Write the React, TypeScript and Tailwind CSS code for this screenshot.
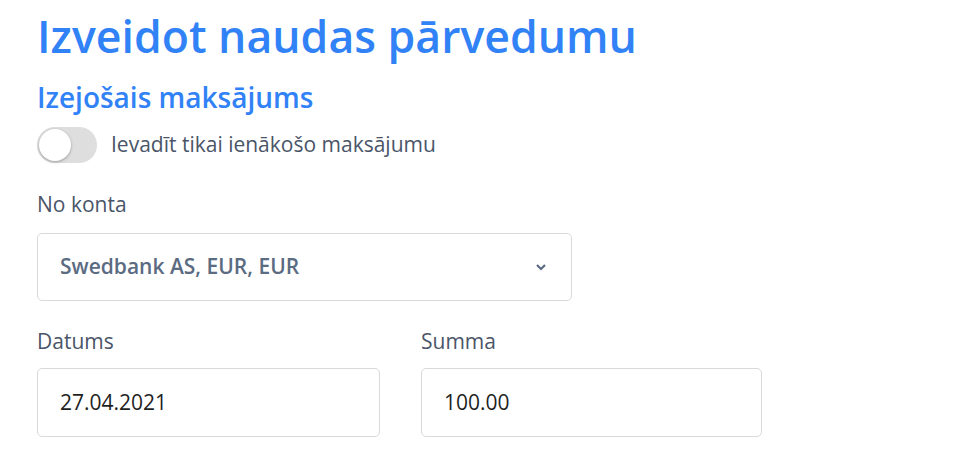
import { useState } from "react";

export default function App() {
  const [incomingOnly, setIncomingOnly] = useState(false);

  return (
    <div className="min-h-screen bg-white px-[37px] pt-[6px] font-['Open_Sans',sans-serif]">
      <h1 className="text-[44.6px] leading-[60px] font-semibold text-[#3182f6]">Izveidot naudas pārvedumu</h1>

      <h2 className="mt-[14px] text-[28px] leading-[34px] font-semibold text-[#3182f6]">Izejošais maksājums</h2>

      {/* toggle */}
      <div className="mt-[13px] flex items-center gap-[14px]">
        <button
          onClick={() => setIncomingOnly(!incomingOnly)}
          className={`relative h-[36px] w-[60px] rounded-full ${incomingOnly ? "bg-[#3182f6]" : "bg-[#dedede]"}`}
        >
          <span
            className={`absolute top-[2px] h-[32px] w-[32px] rounded-full bg-white shadow-[0_1px_3px_rgba(0,0,0,0.3)] ${
              incomingOnly ? "left-[26px]" : "left-[2px]"
            }`}
          />
        </button>
        <span className="text-[21px] text-[#4a5568]">Ievadīt tikai ienākošo maksājumu</span>
      </div>

      {/* account */}
      <div className="mt-[28px] w-[535px]">
        <label className="block text-[21px] leading-[26px] text-[#4a5568]">No konta</label>
        <div className="mt-[16px] flex h-[68px] items-center justify-between rounded-[5px] border border-[#d9d9d9] px-[22px]">
          <span className="text-[21px] font-semibold text-[#5b6b82]">Swedbank AS, EUR, EUR</span>
          <svg width="12" height="8" viewBox="0 0 12 8" className="mr-[2px]">
            <path d="M2 2l4 4 4-4" fill="none" stroke="#5b6b82" strokeWidth="2.2" />
          </svg>
        </div>
      </div>

      {/* date + amount */}
      <div className="mt-[27px] flex gap-[41px]">
        <div className="w-[343px]">
          <label className="block text-[21px] leading-[26px] text-[#4a5568]">Datums</label>
          <div className="mt-[14px] flex h-[69px] items-center rounded-[5px] border border-[#d9d9d9] px-[22px]">
            <span className="text-[21px] text-[#1f1f1f]">27.04.2021</span>
          </div>
        </div>
        <div className="w-[341px]">
          <label className="block text-[21px] leading-[26px] text-[#4a5568]">Summa</label>
          <div className="mt-[14px] flex h-[69px] items-center rounded-[5px] border border-[#d9d9d9] px-[22px]">
            <span className="text-[21px] text-[#1f1f1f]">100.00</span>
          </div>
        </div>
      </div>
    </div>
  );
}
